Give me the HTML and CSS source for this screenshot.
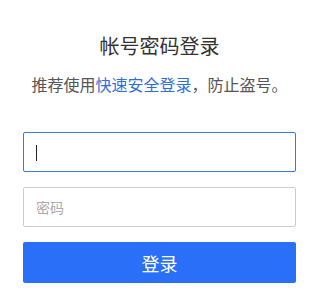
FILE: index.html
```html
<!DOCTYPE html>
<html lang="zh-CN">

<head>
  <meta charset="UTF-8">
  <meta name="viewport" content="width=device-width, initial-scale=1.0">
  <title>帐号密码登录</title>
  <link rel="stylesheet" href="styles.css">
</head>

<body>
  <!-- Login box -->
  <div class="login">
    <h2 class="login-title">帐号密码登录</h2>
    <p class="login-tip">推荐使用<a href="#">快速安全登录</a>，防止盗号。</p>

    <form class="login-form" onsubmit="return false;">
      <div class="field-wrap">
        <input type="text" class="field field-active">
        <span class="caret"></span>
      </div>
      <input type="password" class="field" placeholder="密码">
      <button class="btn-login">登录</button>
    </form>
  </div>
</body>

</html>
```

FILE: styles.css
```css
body {
  font-family: "Noto Sans CJK SC", "Liberation Sans", sans-serif;
  margin: 0;
  padding: 0;
  background-color: #ffffff;
}

/* Login box */
.login {
  width: 273px;
  padding: 31px 0 0 23px;
}

.login-title {
  margin: 0;
  font-size: 20px;
  font-weight: normal;
  line-height: 30px;
  color: #333333;
  text-align: center;
}

.login-tip {
  margin: 12px 0 0 -15px;
  width: 303px;
  font-size: 16px;
  line-height: 22px;
  color: #555555;
  text-align: center;
}

.login-tip a {
  color: #2e6fd9;
  text-decoration: none;
}

/* Form */
.login-form {
  display: flex;
  flex-direction: column;
  gap: 15px;
  margin-top: 37px;
}

.field-wrap {
  position: relative;
}

.field {
  box-sizing: border-box;
  width: 100%;
  height: 40px;
  padding: 0 12px;
  border: 1px solid #cccccc;
  border-radius: 2px;
  font-family: inherit;
  font-size: 14px;
  color: #333333;
  outline: none;
}

.field-wrap .field {
  display: block;
}

.field::placeholder {
  color: #aaaaaa;
}

.field-active {
  border-color: #3a78d6;
}

/* fake text cursor in the focused field */
.caret {
  position: absolute;
  left: 13px;
  top: 13px;
  width: 1px;
  height: 16px;
  background-color: #222222;
}

.btn-login {
  height: 41px;
  border: none;
  border-radius: 2px;
  background-color: #2a6ff8;
  color: #ffffff;
  font-family: inherit;
  font-size: 18px;
  cursor: pointer;
}
```
